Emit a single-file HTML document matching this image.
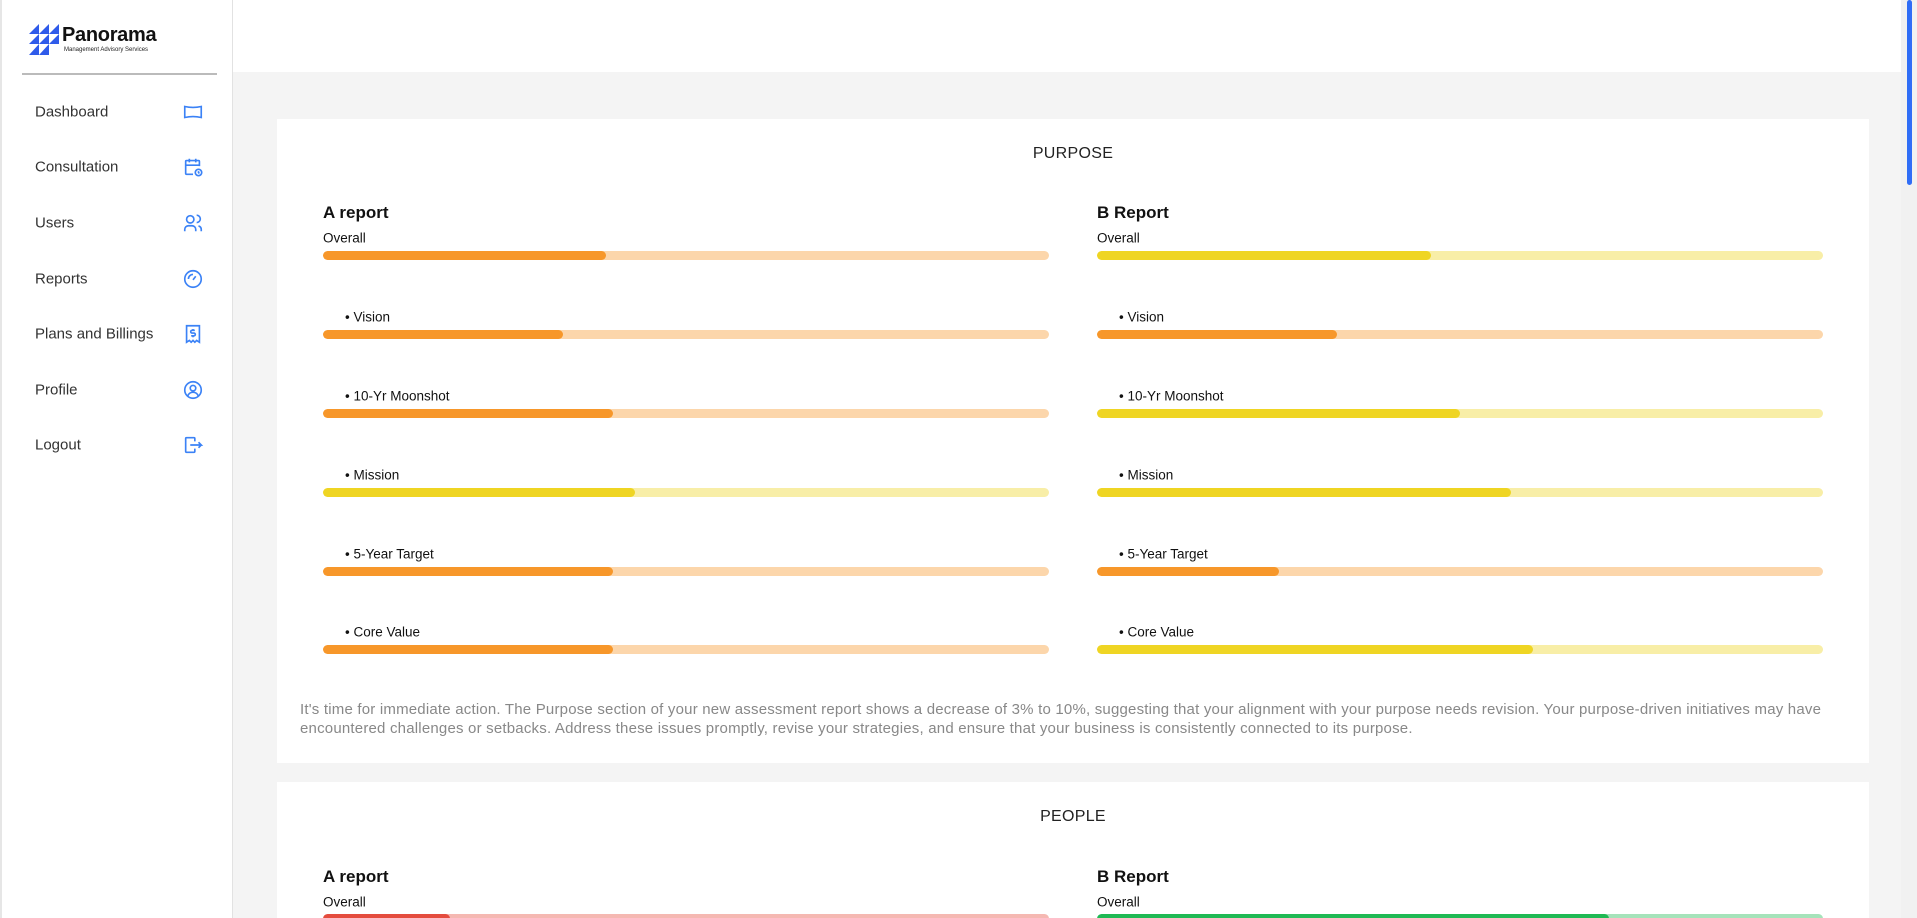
<!DOCTYPE html>
<html style="overflow:hidden;height:918px"><head><meta charset="utf-8"><style>
*{margin:0;padding:0;box-sizing:border-box}
body{width:1917px;height:918px;overflow:hidden;background:#f4f4f4;font-family:"Liberation Sans",sans-serif;position:relative;color:#222}
.side{position:absolute;left:0;top:0;width:233px;height:918px;background:#fff;border-right:1px solid #e2e2e2;border-left:2px solid #e6e6e6}
.hdr{position:absolute;left:233px;top:0;width:1668px;height:72px;background:#fff}
.sb{position:absolute;right:0;top:0;width:16px;height:918px;background:#f1f1f1}
.sb div{position:absolute;left:6px;top:0;width:5px;height:185px;background:#2f6df6;border-radius:3px}
.div{position:absolute;left:20px;top:73px;width:195px;height:2px;background:#bbb}
.mi{position:absolute;left:33px;font-size:15px;color:#333;transform:translateY(-50%)}
.ic{position:absolute;left:180px;width:22px;height:22px;transform:translateY(-50%)}
.card{position:absolute;left:277px;width:1592px;background:#fff}
.t{position:absolute;font-size:16px;color:#222;transform:translate(-50%,-50%);letter-spacing:.3px}
.h{position:absolute;font-size:17px;font-weight:bold;transform:translateY(-50%);color:#111}
.l{position:absolute;font-size:13.5px;transform:translateY(-50%);color:#111}
.bar{position:absolute;height:9px;width:726px;border-radius:5px;overflow:hidden}
.bar i{display:block;height:100%;border-radius:5px}
.o{background:#fcd6ab}.o i{background:#f7972a}
.y{background:#f8eea7}.y i{background:#efd523}
.r{background:#f5b8b2}.r i{background:#e44c3e}
.g{background:#a5e3ba}.g i{background:#1fb954}
.p{position:absolute;left:23px;top:581px;width:1540px;font-size:15px;line-height:19px;color:#888;letter-spacing:.2px}
</style></head><body>
<div class="side">
<svg style="position:absolute;left:27px;top:24px" width="30" height="31" viewBox="0 0 30 31"><g fill="#2f5bea"><polygon points="0,10 10,0 10,10"/><polygon points="10,10 20,0 20,10"/><polygon points="20,10 30,0 30,10"/><polygon points="0,20 10,10 10,20"/><polygon points="10,20 20,10 20,20"/><polygon points="20,20 30,10 30,20"/><polygon points="0,31 10,20 10,31"/><polygon points="10,31 20,20 20,31"/></g></svg>
<div style="position:absolute;left:60px;top:24px;font-size:20px;font-weight:bold;color:#111;letter-spacing:-.3px">Panorama</div>
<div style="position:absolute;left:62px;top:47px;font-size:6px;color:#222;white-space:nowrap">Management Advisory Services</div>
<div class="div"></div>
<div class="mi" style="top:112px">Dashboard</div>
<svg class="ic" style="top:112px" viewBox="0 0 24 24" fill="none" stroke="#3b82f6" stroke-width="1.8"><path d="M3 6q9 2 18 0v12q-9-2-18 0z"/></svg>
<div class="mi" style="top:167px">Consultation</div>
<svg class="ic" style="top:167px" viewBox="0 0 24 24" fill="none" stroke="#3b82f6" stroke-width="1.8"><path d="M12 20H5a1 1 0 0 1-1-1V6a1 1 0 0 1 1-1h13a1 1 0 0 1 1 1v5M4 10h15M8 3v4M15 3v4"/><circle cx="18" cy="18" r="3.5"/><path d="M18 16.5v1.5l1 1"/></svg>
<div class="mi" style="top:223px">Users</div>
<svg class="ic" style="top:223px" viewBox="0 0 24 24" fill="none" stroke="#3b82f6" stroke-width="1.8"><circle cx="9" cy="8" r="4"/><path d="M3 21v-2a4 4 0 0 1 4-4h4a4 4 0 0 1 4 4v2M16 3.5a4 4 0 0 1 0 8M21 21v-2a4 4 0 0 0-3-3.8"/></svg>
<div class="mi" style="top:279px">Reports</div>
<svg class="ic" style="top:279px" viewBox="0 0 24 24" fill="none" stroke="#3b82f6" stroke-width="1.8"><circle cx="12" cy="12" r="9"/><path d="M12 13l3-4M7 12a5 5 0 0 1 5-5"/></svg>
<div class="mi" style="top:334px">Plans and Billings</div>
<svg class="ic" style="top:334px" viewBox="0 0 24 24" fill="none" stroke="#3b82f6" stroke-width="1.8"><path d="M5 3h14v18l-3-2-2 2-2-2-2 2-2-2-3 2z"/><path d="M14 8h-3a1.5 1.5 0 0 0 0 3h2a1.5 1.5 0 0 1 0 3h-3M12 6.5v1.5M12 14v1.5"/></svg>
<div class="mi" style="top:390px">Profile</div>
<svg class="ic" style="top:390px" viewBox="0 0 24 24" fill="none" stroke="#3b82f6" stroke-width="1.8"><circle cx="12" cy="12" r="9"/><circle cx="12" cy="10" r="3"/><path d="M6.2 18.8a6 6 0 0 1 11.6 0"/></svg>
<div class="mi" style="top:445px">Logout</div>
<svg class="ic" style="top:445px" viewBox="0 0 24 24" fill="none" stroke="#3b82f6" stroke-width="1.8"><path d="M14 8V5a1 1 0 0 0-1-1H5a1 1 0 0 0-1 1v14a1 1 0 0 0 1 1h8a1 1 0 0 0 1-1v-3M9 12h12l-3-3M21 12l-3 3"/></svg>
</div>
<div class="hdr"></div>

<div class="card" style="top:119px;height:644px">
<div class="t" style="left:796px;top:35px">PURPOSE</div>
<div class="h" style="left:46px;top:94px">A report</div>
<div class="h" style="left:820px;top:94px">B Report</div>
<div class="l" style="left:46px;top:119px">Overall</div>
<div class="l" style="left:820px;top:119px">Overall</div>
<div class="bar o" style="left:46px;top:132px"><i style="width:39%"></i></div>
<div class="bar y" style="left:820px;top:132px"><i style="width:46%"></i></div>

<div class="l" style="left:68px;top:198px">• Vision</div>
<div class="l" style="left:842px;top:198px">• Vision</div>
<div class="bar o" style="left:46px;top:211px"><i style="width:33%"></i></div>
<div class="bar o" style="left:820px;top:211px"><i style="width:33%"></i></div>

<div class="l" style="left:68px;top:277px">• 10-Yr Moonshot</div>
<div class="l" style="left:842px;top:277px">• 10-Yr Moonshot</div>
<div class="bar o" style="left:46px;top:290px"><i style="width:40%"></i></div>
<div class="bar y" style="left:820px;top:290px"><i style="width:50%"></i></div>

<div class="l" style="left:68px;top:356px">• Mission</div>
<div class="l" style="left:842px;top:356px">• Mission</div>
<div class="bar y" style="left:46px;top:369px"><i style="width:43%"></i></div>
<div class="bar y" style="left:820px;top:369px"><i style="width:57%"></i></div>

<div class="l" style="left:68px;top:435px">• 5-Year Target</div>
<div class="l" style="left:842px;top:435px">• 5-Year Target</div>
<div class="bar o" style="left:46px;top:448px"><i style="width:40%"></i></div>
<div class="bar o" style="left:820px;top:448px"><i style="width:25%"></i></div>

<div class="l" style="left:68px;top:513px">• Core Value</div>
<div class="l" style="left:842px;top:513px">• Core Value</div>
<div class="bar o" style="left:46px;top:526px"><i style="width:40%"></i></div>
<div class="bar y" style="left:820px;top:526px"><i style="width:60%"></i></div>

<div class="p">It's time for immediate action. The Purpose section of your new assessment report shows a decrease of 3% to 10%, suggesting that your alignment with your purpose needs revision. Your purpose-driven initiatives may have encountered challenges or setbacks. Address these issues promptly, revise your strategies, and ensure that your business is consistently connected to its purpose.</div>
</div>

<div class="card" style="top:782px;height:136px;overflow:hidden">
<div class="t" style="left:796px;top:35px">PEOPLE</div>
<div class="h" style="left:46px;top:95px">A report</div>
<div class="h" style="left:820px;top:95px">B Report</div>
<div class="l" style="left:46px;top:120px">Overall</div>
<div class="l" style="left:820px;top:120px">Overall</div>
<div class="bar r" style="left:46px;top:132px"><i style="width:17.5%"></i></div>
<div class="bar g" style="left:820px;top:132px"><i style="width:70.5%"></i></div>
</div>

<div class="sb"><div></div></div>
</body></html>
